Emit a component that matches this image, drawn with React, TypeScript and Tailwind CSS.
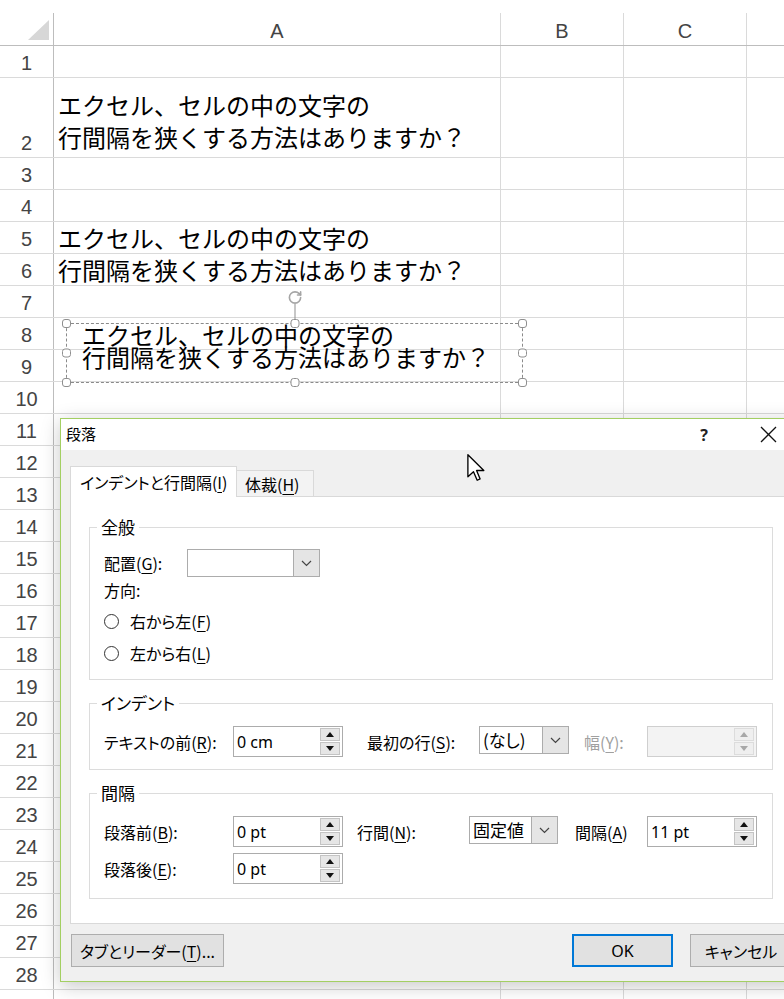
import React from "react"
import { RotateCw } from "lucide-react"

const jp = "font-['Noto_Sans_CJK_JP',sans-serif]"
const ui = "font-['Noto_Sans_CJK_JP',sans-serif] [font-feature-settings:'palt']"
const latin = "font-['Noto_Sans','Noto_Sans_CJK_JP',sans-serif]"
const num = "font-['Liberation_Sans',sans-serif]"

const LINE1 = "エクセル、セルの中の文字の"
const LINE2 = "行間隔を狭くする方法はありますか？"

interface SheetRow {
  n: number
  tall?: boolean
  text?: string[]
}

const rows: SheetRow[] = Array.from({ length: 29 }, (_, i) => {
  const n = i + 1
  if (n === 2) return { n, tall: true, text: [LINE1, LINE2] }
  if (n === 5) return { n, text: [LINE1] }
  if (n === 6) return { n, text: [LINE2] }
  return { n }
})

const Key = ({ k }: { k: string }) => (
  <span className="underline underline-offset-[3px]">{k}</span>
)

const Chevron = () => (
  <svg width="11" height="7" viewBox="0 0 11 7">
    <polyline points="1,1 5.5,5.5 10,1" fill="none" stroke="#444" strokeWidth="1.2" />
  </svg>
)

const Combo = ({ value, className }: { value?: string; className: string }) => (
  <div className={`flex h-[28px] self-start border border-[#acacac] bg-white ${className}`}>
    <span className={`flex-1 pl-[3px] text-[17px] leading-[26px] text-black ${jp}`}>{value}</span>
    <div className="flex w-[26px] items-center justify-center border-l border-[#acacac] bg-[#e5e5e5]">
      <Chevron />
    </div>
  </div>
)

const SpinButton = ({ up, disabled }: { up?: boolean; disabled?: boolean }) => (
  <div
    className={`flex h-[13px] w-[20px] items-center justify-center border ${
      disabled ? "border-[#dcdcdc] bg-[#efefef]" : "border-[#c4c4c4] bg-[#e6e6e6]"
    }`}
  >
    <svg width="8" height="5" viewBox="0 0 8 5">
      <polygon
        points={up ? "0,5 4,0 8,5" : "0,0 4,5 8,0"}
        fill={disabled ? "#a8a8a8" : "#111"}
      />
    </svg>
  </div>
)

const Spinner = ({ value, disabled }: { value?: string; disabled?: boolean }) => (
  <div
    className={`flex h-[31px] w-[110px] items-center border ${
      disabled ? "border-[#cfcfcf] bg-[#f3f3f3]" : "border-[#acacac] bg-white"
    }`}
  >
    <span className={`flex-1 pl-[3px] text-[16px] text-black ${latin}`}>{value}</span>
    <div className="mr-[2px] flex flex-col gap-px">
      <SpinButton up disabled={disabled} />
      <SpinButton disabled={disabled} />
    </div>
  </div>
)

const Group = ({
  title,
  className,
  children,
}: {
  title: string
  className: string
  children: React.ReactNode
}) => (
  <div className={`relative border border-[#dcdcdc] pl-[14px] ${className}`}>
    <span className={`absolute -top-[11px] left-[7px] bg-white px-[4px] text-[17px] leading-[20px] text-black ${ui}`}>
      {title}
    </span>
    {children}
  </div>
)

const Radio = ({ children }: { children: React.ReactNode }) => (
  <div className="flex h-[32px] items-center gap-[11px]">
    <span className="h-[15px] w-[15px] rounded-full border border-[#333] bg-white" />
    <span>{children}</span>
  </div>
)

const Cursor = () => (
  <svg className="absolute left-[406px] top-[35px]" width="18" height="28" viewBox="0 0 12 19">
    <path
      d="M0.5 0.5 V15.5 L4.3 12 L6.8 17.8 L8.8 16.9 L6.4 11.2 H11.3 Z"
      fill="#fff"
      stroke="#000"
      strokeWidth="0.9"
      strokeLinejoin="round"
    />
  </svg>
)

const ParagraphDialog = () => (
  <div className="absolute left-[60px] top-[418px] flex h-[564px] w-[742px] flex-col border border-[#a3cf62] bg-[#f0f0f0] shadow-[0_4px_18px_rgba(0,0,0,0.22)]">
    {/* title bar */}
    <div className="flex h-[31px] items-center bg-white pl-[5px]">
      <span className={`text-[15px] text-black ${jp}`}>段落</span>
      <span className={`ml-auto w-[46px] text-center text-[16px] font-bold text-[#222] ${latin}`}>?</span>
      <span className="ml-[18px] mr-[10px] flex w-[46px] justify-center">
        <svg width="17" height="17" viewBox="0 0 17 17">
          <path d="M1 1 L16 16 M16 1 L1 16" stroke="#111" strokeWidth="1.3" />
        </svg>
      </span>
    </div>

    <div className={`flex flex-1 flex-col px-[9px] pt-[16px] text-[16px] text-black ${ui}`}>
      {/* tabs */}
      <div className="flex h-[30px] items-end whitespace-nowrap">
        <div className="relative z-10 -mb-px flex h-[31px] w-[167px] items-center border border-b-0 border-[#d9d9d9] bg-white pl-[9px]">
          インデントと行間隔(<Key k="I" />)
        </div>
        <div className="flex h-[26px] w-[77px] items-center border border-b-0 border-l-0 border-[#d9d9d9] bg-[#f3f3f3] pl-[8px]">
          体裁(<Key k="H" />)
        </div>
      </div>

      {/* tab page */}
      <div className="h-[428px] whitespace-nowrap border border-[#d9d9d9] bg-white px-[18px] pt-[30px]">
        <Group title="全般" className="h-[153px] pt-[21px]">
          <div className="flex h-[28px] items-center">
            <span className="w-[83px]">
              配置(<Key k="G" />):
            </span>
            <Combo className="w-[133px]" />
          </div>
          <div className="flex h-[26px] items-center">方向:</div>
          <div className="mt-[2px]">
            <Radio>
              右から左(<Key k="F" />)
            </Radio>
            <Radio>
              左から右(<Key k="L" />)
            </Radio>
          </div>
        </Group>

        <Group title="インデント" className="mt-[23px] h-[67px] pt-[22px]">
          <div className="flex h-[31px] items-center">
            <span className="w-[129px]">
              テキストの前(<Key k="R" />):
            </span>
            <Spinner value="0 cm" />
            <span className="ml-[24px] w-[112px]">
              最初の行(<Key k="S" />):
            </span>
            <Combo value="(なし)" className="w-[90px]" />
            <span className="ml-[15px] w-[63px] text-[#a0a0a0]">
              幅(<Key k="Y" />):
            </span>
            <Spinner disabled />
          </div>
        </Group>

        <Group title="間隔" className="mt-[23px] h-[106px] pt-[22px]">
          <div className="flex h-[31px] items-center">
            <span className="w-[129px]">
              段落前(<Key k="B" />):
            </span>
            <Spinner value="0 pt" />
            <span className="ml-[14px] w-[112px]">
              行間(<Key k="N" />):
            </span>
            <Combo value="固定値" className="w-[89px]" />
            <span className="ml-[17px] w-[72px]">
              間隔(<Key k="A" />)
            </span>
            <Spinner value="11 pt" />
          </div>
          <div className="mt-[6px] flex h-[31px] items-center">
            <span className="w-[129px]">
              段落後(<Key k="E" />):
            </span>
            <Spinner value="0 pt" />
          </div>
        </Group>
      </div>

      {/* buttons */}
      <div className="mt-[10px] flex h-[33px] whitespace-nowrap">
        <button className="ml-px w-[153px] border border-[#adadad] bg-[#e1e1e1]">
          タブとリーダー(<Key k="T" />)...
        </button>
        <button className={`ml-auto w-[101px] border-2 border-[#0078d7] bg-[#e1e1e1] ${latin}`}>
          OK
        </button>
        <button className="ml-[17px] w-[102px] border border-[#adadad] bg-[#e1e1e1]">
          キャンセル
        </button>
      </div>
    </div>

    <Cursor />
  </div>
)

const Handle = ({ className }: { className: string }) => (
  <span className={`absolute h-[9px] w-[9px] rounded-[3px] border border-[#8f8f8f] bg-white ${className}`} />
)

const TextBox = () => (
  <div className="absolute left-[66px] top-[323px] h-[60px] w-[457px] border border-dashed border-[#8a8a8a]">
    <div className={`pl-[15px] text-[24px] leading-[22px] text-black ${jp}`}>
      <div>{LINE1}</div>
      <div>{LINE2}</div>
    </div>
    {/* rotation handle */}
    <span className="absolute left-1/2 -top-[20px] h-[15px] w-px -translate-x-1/2 bg-[#8f8f8f]" />
    <RotateCw
      size={15}
      strokeWidth={2.6}
      color="#a5a5a5"
      className="absolute left-1/2 -top-[34px] -translate-x-1/2"
    />
    <Handle className="-left-[5px] -top-[5px]" />
    <Handle className="left-1/2 -top-[5px] -translate-x-1/2" />
    <Handle className="-right-[5px] -top-[5px]" />
    <Handle className="-left-[5px] top-1/2 -translate-y-1/2" />
    <Handle className="-right-[5px] top-1/2 -translate-y-1/2" />
    <Handle className="-bottom-[5px] -left-[5px]" />
    <Handle className="-bottom-[5px] left-1/2 -translate-x-1/2" />
    <Handle className="-bottom-[5px] -right-[5px]" />
  </div>
)

export default function App() {
  return (
    <div className="relative h-[999px] w-[784px] overflow-hidden bg-white">
      <div className="h-[13px]" />

      {/* column headers */}
      <div className={`flex h-[33px] border-b border-[#bdbdbd] text-[20px] text-[#444] ${num}`}>
        <div className="flex w-[54px] items-end justify-end border-r border-[#bdbdbd] pb-[5px] pr-[4px]">
          <svg width="21" height="20" viewBox="0 0 21 20">
            <polygon points="21,0 21,20 0,20" fill="#d7d7d7" />
          </svg>
        </div>
        <div className="flex w-[447px] items-center justify-center border-r border-[#dadada] pt-[4px]">A</div>
        <div className="flex w-[123px] items-center justify-center border-r border-[#dadada] pt-[4px]">B</div>
        <div className="flex w-[123px] items-center justify-center border-r border-[#dadada] pt-[4px]">C</div>
        <div className="flex-1" />
      </div>

      {/* rows */}
      {rows.map((row) => (
        <div
          key={row.n}
          className={`flex border-b border-[#dadada] ${row.tall ? "h-[80px]" : "h-[32px]"}`}
        >
          <div
            className={`flex w-[54px] items-end justify-center border-r border-[#bdbdbd] pb-[4px] text-[20px] leading-[20px] text-[#444] ${num}`}
          >
            {row.n < 29 ? row.n : null}
          </div>
          <div
            className={`flex w-[447px] flex-col border-r border-[#dadada] pl-[4px] text-[24px] text-black ${jp} ${
              row.tall ? "justify-end pb-[4px] leading-[32px]" : "justify-center leading-[31px]"
            }`}
          >
            {row.text?.map((t) => (
              <div key={t} className="whitespace-nowrap">
                {t}
              </div>
            ))}
          </div>
          <div className="w-[123px] border-r border-[#dadada]" />
          <div className="w-[123px] border-r border-[#dadada]" />
          <div className="flex-1" />
        </div>
      ))}

      <TextBox />
      <ParagraphDialog />
    </div>
  )
}
